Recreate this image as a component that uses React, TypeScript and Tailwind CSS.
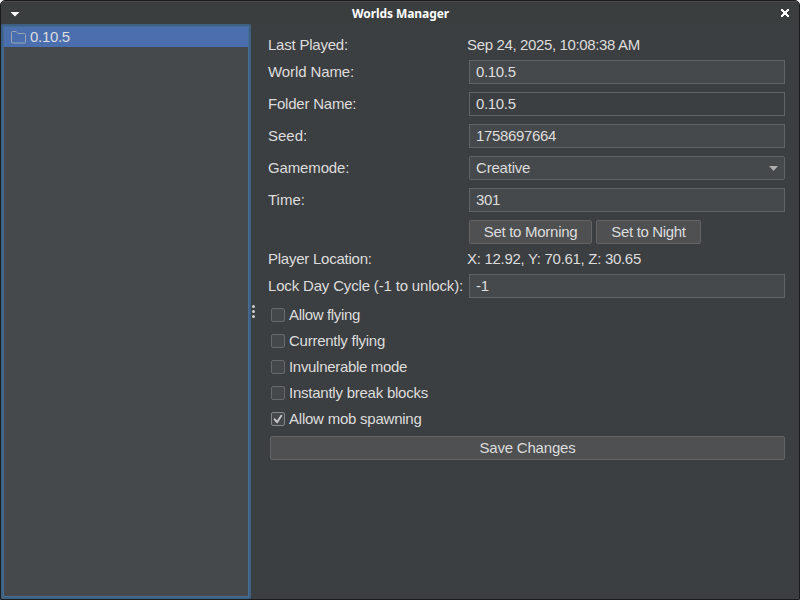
import React from 'react';

function Label({ children, tracking = '' }: { children: React.ReactNode; tracking?: string }) {
  return <div className={`w-[202px] shrink-0 whitespace-nowrap pl-px ${tracking}`}>{children}</div>;
}

function Row({ label, tracking, children }: { label: string; tracking?: string; children: React.ReactNode }) {
  return (
    <div className="flex h-8 items-center">
      <Label tracking={tracking}>{label}</Label>
      {children}
    </div>
  );
}

function Field({ value, readOnly = false }: { value: string; readOnly?: boolean }) {
  return (
    <div
      className={`flex h-6 flex-1 items-center border border-[#616365] pl-1.5 tracking-[-0.34px] ${
        readOnly ? 'bg-[#3c3f41]' : 'bg-[#46494b]'
      }`}
    >
      {value}
    </div>
  );
}

function Button({ label, className }: { label: string; className: string }) {
  return (
    <button
      className={`flex h-6 items-center justify-center whitespace-nowrap rounded-[2px] border border-[#616365] bg-[#4e5052] ${className}`}
    >
      {label}
    </button>
  );
}

function Check({ label, tracking, checked = false }: { label: string; tracking: string; checked?: boolean }) {
  return (
    <div className="flex h-[26px] items-center gap-1 pl-1">
      <div
        className={`flex size-3.5 items-center justify-center rounded-[2px] border bg-[#44484a] ${
          checked ? 'border-[#84878a]' : 'border-[#66686a]'
        }`}
      >
        {checked && (
          <svg width="12" height="12" viewBox="0 0 12 12" fill="none">
            <path d="M2.7 6.3 L5 9.2 L9.3 2.7" stroke="#c8c8c8" strokeWidth="1.9" strokeLinecap="round" strokeLinejoin="round" />
          </svg>
        )}
      </div>
      <span className={tracking}>{label}</span>
    </div>
  );
}

export default function App() {
  return (
    <div className="h-[600px] w-[800px] bg-white">
      <div className="flex h-full w-full flex-col overflow-hidden rounded-t-[5px] border border-[#1c1c1c] bg-[#3c3f41] font-['Liberation_Sans',sans-serif] text-[15px] leading-[18px] text-[#dddddd]">
        <header className="flex h-[23px] shrink-0 items-center justify-between border-t border-[#4a4a4a] bg-[#3b3e3e] pl-[9px] pr-[9px] text-white">
          <svg width="10" height="5" viewBox="0 0 10 5" className="mt-[2px]">
            <path d="M0.5 0h9L5 4.5z" fill="#fff" />
          </svg>
          <h1 className="pl-px pt-px font-['Noto_Sans',sans-serif] text-[12px] font-bold tracking-[-0.07px]">Worlds Manager</h1>
          <svg width="10" height="8" viewBox="0 0 10 8">
            <path d="M1 0h2v1h1v1h2v-1h1v-1h2v2h-1v1h-1v2h1v1h1v2h-2v-1h-1v-1h-2v1h-1v1h-2v-2h1v-1h1v-2h-1v-1h-1z" fill="#fff" />
          </svg>
        </header>
        <div className="flex min-h-0 flex-1">
          <aside className="w-[250px] shrink-0 rounded-[2px] border-2 border-[#3d6185] bg-[#46494b]">
            <div className="h-full border border-[#466d94]">
              <div className="flex h-5 items-center gap-1 bg-[#4b6eaf] pl-[7px]">
                <svg width="15" height="13" viewBox="0 0 15 13" fill="none">
                  <path d="M0.5 1.5a1 1 0 0 1 1-1h3.6l2 2h6.4a1 1 0 0 1 1 1v7.5a1 1 0 0 1-1 1h-12a1 1 0 0 1-1-1z" stroke="#9aa7b0" />
                </svg>
                <span className="tracking-[-0.3px]">0.10.5</span>
              </div>
            </div>
          </aside>
          <div className="flex w-[5px] shrink-0 flex-col items-center justify-center gap-[2px]">
            <i className="size-[3px] rounded-full bg-[#d0d0d0]" />
            <i className="size-[3px] rounded-full bg-[#d0d0d0]" />
            <i className="size-[3px] rounded-full bg-[#d0d0d0]" />
          </div>
          <main className="flex flex-1 flex-col pl-[11px] pr-[14px] pt-3">
            <div className="flex h-5 items-start">
              <Label tracking="tracking-[-0.22px]">Last Played:</Label>
              <span className="-ml-[2px] tracking-[-0.36px]">Sep 24, 2025, 10:08:38 AM</span>
            </div>
            <Row label="World Name:" tracking="tracking-[-0.1px]"><Field value="0.10.5" /></Row>
            <Row label="Folder Name:" tracking="tracking-[-0.22px]"><Field value="0.10.5" readOnly /></Row>
            <Row label="Seed:"><Field value="1758697664" /></Row>
            <Row label="Gamemode:" tracking="tracking-[-0.14px]">
              <div className="flex h-6 flex-1 items-center justify-between rounded-[2px] border border-[#616365] bg-[#46494b] pl-1.5 pr-1.5">
                <span className="tracking-[-0.2px]">Creative</span>
                <svg width="9" height="5" viewBox="0 0 9 5">
                  <path d="M0 0h9L4.5 5z" fill="#adadad" />
                </svg>
              </div>
            </Row>
            <Row label="Time:"><Field value="301" /></Row>
            <div className="flex h-8 items-center gap-1 pl-[202px]">
              <Button label="Set to Morning" className="w-[123px] tracking-[-0.28px]" />
              <Button label="Set to Night" className="w-[105px] tracking-[-0.33px]" />
            </div>
            <div className="flex h-[22px] items-center">
              <Label tracking="tracking-[-0.24px]">Player Location:</Label>
              <span className="-ml-[2px] tracking-[-0.3px]">X: 12.92, Y: 70.61, Z: 30.65</span>
            </div>
            <Row label="Lock Day Cycle (-1 to unlock):" tracking="tracking-[-0.17px]"><Field value="-1" /></Row>
            <Check label="Allow flying" tracking="tracking-[-0.33px]" />
            <Check label="Currently flying" tracking="tracking-[-0.25px]" />
            <Check label="Invulnerable mode" tracking="tracking-[-0.31px]" />
            <Check label="Instantly break blocks" tracking="tracking-[-0.24px]" />
            <Check label="Allow mob spawning" tracking="tracking-[-0.23px]" checked />
            <div className="pl-[3px] pt-1">
              <Button label="Save Changes" className="w-full tracking-[-0.2px]" />
            </div>
          </main>
        </div>
      </div>
    </div>
  );
}
